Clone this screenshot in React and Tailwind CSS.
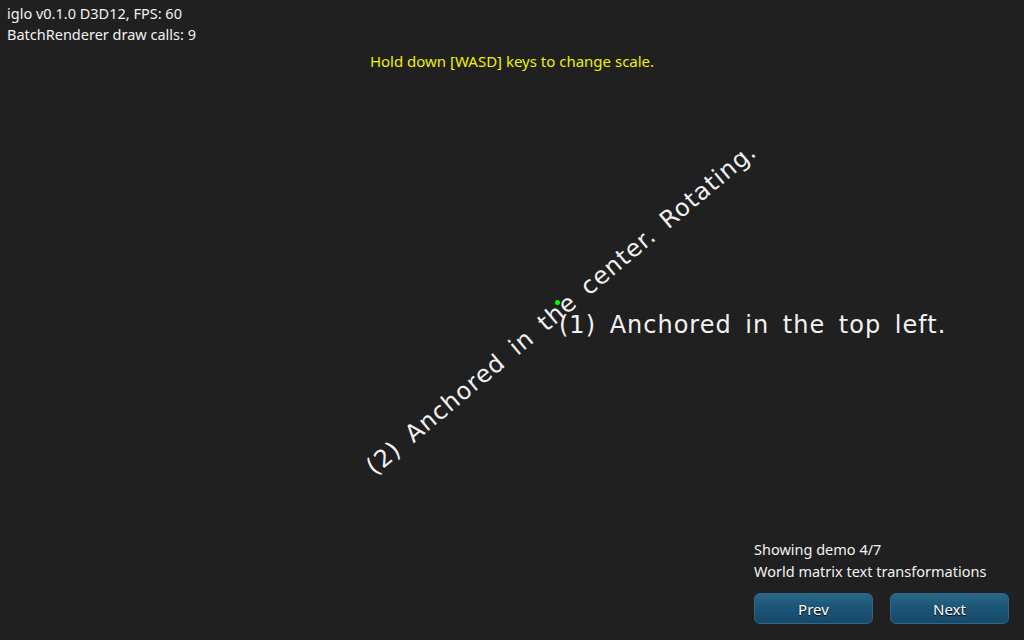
export default function App() {
  return (
    <div className="relative w-[1024px] h-[640px] overflow-hidden bg-[#202020] text-[#f2f2f2] flex flex-col" style={{ fontFamily: '"Noto Sans", "Open Sans", sans-serif' }}>
      {/* HUD oben links */}
      <div className="pl-[7px] pt-[3px] text-[14.5px] leading-[21px]">
        <div>iglo v0.1.0 D3D12, FPS: 60</div>
        <div>BatchRenderer draw calls: 9</div>
      </div>

      <div className="mt-[6px] text-center text-[15px] leading-[21px] text-[#f0f000]">
        Hold down [WASD] keys to change scale.
      </div>

      {/* Canvas-Texte */}
      <div
        className="absolute left-[559px] top-[311px] whitespace-nowrap text-[24px] leading-[28px] tracking-[1px] [word-spacing:5px]"
        style={{ fontFamily: '"DejaVu Sans", sans-serif' }}
      >
        (1) Anchored in the top left.
      </div>
      <div className="absolute left-[561px] top-[309px] w-0 h-0 flex items-center justify-center">
        <div
          className="whitespace-nowrap text-[24px] leading-[28px] tracking-[1px] [word-spacing:5px] -rotate-[40deg]"
          style={{ fontFamily: '"DejaVu Sans", sans-serif' }}
        >
          (2) Anchored in the center. Rotating.
        </div>
      </div>
      <div className="absolute left-[555px] top-[300px] w-[5px] h-[5px] rounded-full bg-[#00ff00]" />

      <div className="flex-1" />

      {/* Demo-Auswahl unten rechts */}
      <div className="self-end mr-[15px] mb-[16px] w-[255px] text-[14.5px] leading-[22px]">
        <div>Showing demo 4/7</div>
        <div>World matrix text transformations</div>
        <div className="mt-[11px] flex gap-[17px]">
          <button className="w-[119px] h-[31px] rounded-[6px] border border-[#2e6684] bg-gradient-to-b from-[#2a6788] via-[#1b5475] to-[#17496a] text-[15px] text-white [text-shadow:0_1px_1px_#000]">
            Prev
          </button>
          <button className="w-[119px] h-[31px] rounded-[6px] border border-[#2e6684] bg-gradient-to-b from-[#2a6788] via-[#1b5475] to-[#17496a] text-[15px] text-white [text-shadow:0_1px_1px_#000]">
            Next
          </button>
        </div>
      </div>
    </div>
  );
}
